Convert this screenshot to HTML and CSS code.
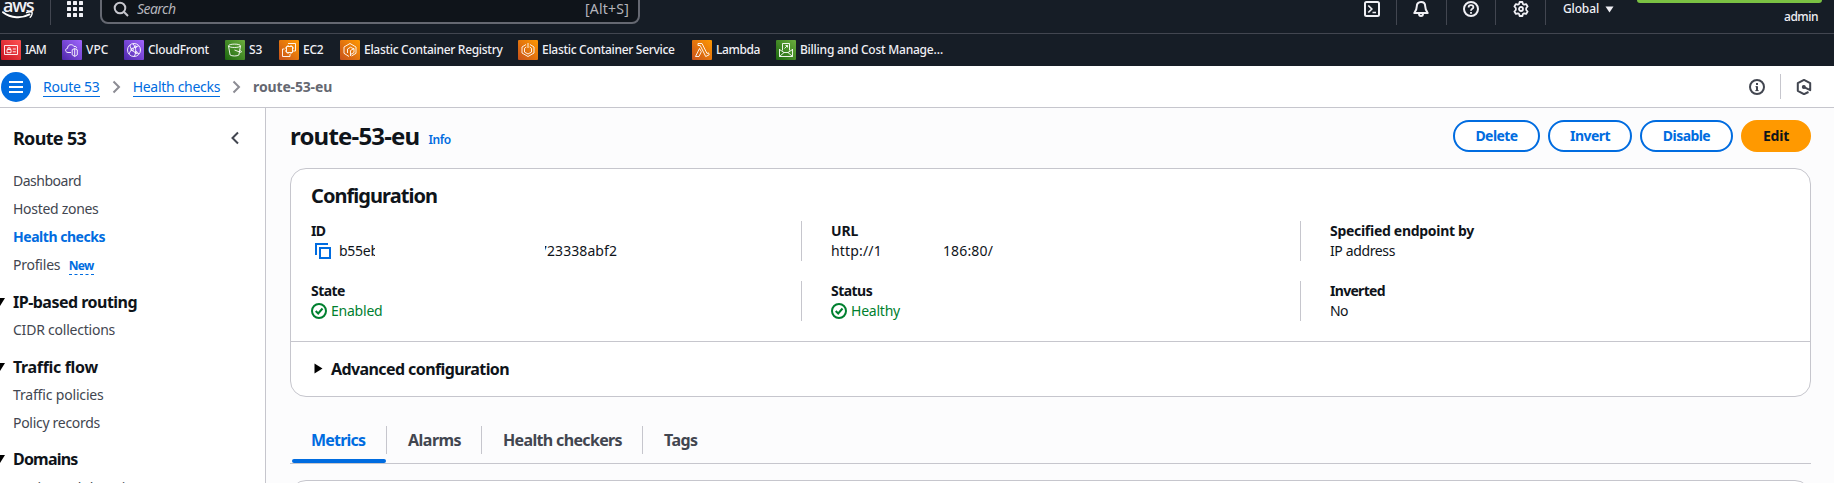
FILE: index.html
```html
<!DOCTYPE html>
<html lang="en">
<head>
<meta charset="utf-8">
<title>route-53-eu</title>
<link rel="stylesheet" href="styles.css">
</head>
<body>
<header class="topbar">
  <div class="logo">
    <span class="logo-word">aws</span>
    <svg class="logo-smile" width="32" height="9" viewBox="0 0 32 9"><path d="M1 1.2C9 7.4 20 7.6 27.5 3.4" fill="none" stroke="#fff" stroke-width="1.9" stroke-linecap="round"/><path d="M24.6 1.6c2-.9 4.6-.9 5.4-.3.5.9-.3 3.600-1.800 5" fill="none" stroke="#fff" stroke-width="1.400" stroke-linecap="round"/></svg>
  </div>
  <i class="sep sep-logo"></i>
  <svg class="grid-icon" width="16" height="16" viewBox="0 0 16 16" fill="#f0f0f5"><rect width="4" height="4" rx=".6"/><rect x="6" width="4" height="4" rx=".6"/><rect x="12" width="4" height="4" rx=".6"/><rect y="6" width="4" height="4" rx=".6"/><rect x="6" y="6" width="4" height="4" rx=".6"/><rect x="12" y="6" width="4" height="4" rx=".6"/><rect y="12" width="4" height="4" rx=".6"/><rect x="6" y="12" width="4" height="4" rx=".6"/><rect x="12" y="12" width="4" height="4" rx=".6"/></svg>
  <div class="search">
    <svg width="16" height="16" viewBox="0 0 16 16" fill="none" stroke="#c6c6cd" stroke-width="2"><circle cx="7" cy="7" r="5.300"/><path d="M10.800 10.800 15 15"/></svg>
    <span class="search-text">Search</span>
    <span class="search-key">[Alt+S]</span>
  </div>
  <div class="tools">
    <span class="tool"><svg width="16" height="16" viewBox="0 0 16 16" fill="none" stroke="#f0f0f5" stroke-width="2"><rect x="1" y="1" width="14" height="14" rx="1.500"/><path d="m4.300 4.500 3.500 3.500-3.500 3.500M8.500 11.500H12" stroke-width="1.700"/></svg></span><i class="sep"></i>
    <span class="tool"><svg width="16" height="16" viewBox="0 0 16 16" fill="none" stroke="#f0f0f5" stroke-width="2" stroke-linejoin="round"><path d="M8 1C5.200 1 3.800 3 3.800 5.200c0 3-.8 4.500-2.500 6.800h13.400c-1.700-2.300-2.500-3.800-2.500-6.800C12.200 3 10.800 1 8 1z"/><path d="M6 12.500c0 1.700.8 2.500 2 2.500s2-.8 2-2.500"/></svg></span><i class="sep"></i>
    <span class="tool"><svg width="16" height="16" viewBox="0 0 16 16" fill="none" stroke="#f0f0f5" stroke-width="2"><circle cx="8" cy="8" r="7"/><path d="M5.600 6.500C5.600 5 6.600 4.200 8 4.200s2.400.8 2.400 2.100C10.400 7.800 8 7.900 8 9.700" stroke-width="1.800"/><path d="M8 10.900v1.800" stroke-width="1.800"/></svg></span><i class="sep"></i>
    <span class="tool"><svg width="16" height="16" viewBox="0 0 16 16" fill="none" stroke="#f0f0f5" stroke-width="1.800" stroke-linejoin="round"><path d="M6.600 1h2.800l.5 2 1.200.7 2-.6 1.500 2.400L13.200 7v2l1.400 1.500-1.500 2.400-2-.6-1.200.7-.5 2H6.600l-.5-2-1.200-.7-2 .6-1.500-2.400L2.800 9V7L1.400 5.500l1.500-2.400 2 .6L6.100 3z"/><circle cx="8" cy="8" r="2"/></svg></span><i class="sep"></i>
    <span class="region">Global <svg width="9" height="7" viewBox="0 0 9 7"><path d="M.5.5h8L4.500 6.500z" fill="#f0f0f5"/></svg></span>
    <span class="account"><i class="account-badge"></i><span>admin</span></span>
  </div>
</header>

<nav class="favorites">
  <a class="fav"><svg class="tile red" viewBox="0 0 20 20"><path d="M3.500 5.500h13v9h-13zM6 9.500h4v3.200H6zM6.900 9.500V7.800h2.200v1.700M11.800 9h3M11.800 11.800h3"/></svg><span class="ls-iam">IAM</span></a>
  <a class="fav"><svg class="tile purple" viewBox="0 0 20 20"><path d="M9 12.500H6c-3 0-3.200-4-.4-4.200C5.300 4.500 10.500 3.300 12 6.500c1.500-.6 2.700.3 2.600 1.700M10.200 9.800l2.500-1.300 2.600 1.300v5l-2.600 1.700-2.500-1.700zM12.700 8.700v7.500"/></svg><span class="ls-0">VPC</span></a>
  <a class="fav"><svg class="tile purple" viewBox="0 0 20 20"><circle cx="10" cy="10" r="6.500"/><path d="M5 14c2-5 5-7 9.500-8M6 5c.5 5 3.500 7.500 9 8.500M9 4c3 3 3.500 8 1.500 12"/><circle cx="8.300" cy="9.500" r="1.300"/><circle cx="11.500" cy="6.800" r="1"/><circle cx="12.300" cy="12.500" r="1"/></svg><span>CloudFront</span></a>
  <a class="fav"><svg class="tile green" viewBox="0 0 20 20"><ellipse cx="9.500" cy="5.800" rx="6" ry="1.700"/><path d="m3.500 6 1.600 9c1.500 1.300 7.300 1.300 8.800 0l1.600-9M9.500 10l6 2.300c1.500 0 1.300-1-.8-2"/></svg><span class="ls-0">S3</span></a>
  <a class="fav"><svg class="tile orange" viewBox="0 0 20 20"><path d="M7.500 6.500h6v6h-6zM9 6.500V5m3 1.500V5m-3 9v-1.500m3 1.500v-1.500M7.500 8H6m1.500 3H6m9-3h-1.500m1.500 3h-1.500M9 3.500h7.500V11H15M5.500 9h-2v7.500H11V14"/></svg><span>EC2</span></a>
  <a class="fav"><svg class="tile orange" viewBox="0 0 20 20"><path d="M9 16.500 4 13.300V7l6-3.500L16 7v6.300L11.500 16M7.500 13V9l3-1.800L14 9M10.500 16V10.500L14 8.500v4l-3.500 2"/></svg><span>Elastic Container Registry</span></a>
  <a class="fav"><svg class="tile orange" viewBox="0 0 20 20"><path d="M8 4.500 4 7v6l6 3.500 6-3.500V7l-4-2.500M8.300 7 6.500 8.300v3.800L10 14l3.500-1.900V8.300L11.700 7M10 3v5"/></svg><span>Elastic Container Service</span></a>
  <a class="fav"><svg class="tile orange" viewBox="0 0 20 20"><path d="M6 3.500h4l5 10 1.500-.7.700 2-3.500 1.700-5.500-11H6zM7.500 8.500 3.500 16.500h3.500l2.300-4.800z"/></svg><span class="ls-2">Lambda</span></a>
  <a class="fav"><svg class="tile green" viewBox="0 0 20 20"><path d="M3.500 9v7.500h13V9M3.500 9.500 8 12.500h4l4.500-3M3.500 16.500l4.500-4M16.500 16.500l-4.500-4M6.500 10.500V3.500h7v7M8.500 8.500l3-3M9.500 5.500h2v2"/></svg><span class="ls-1">Billing and Cost Manage…</span></a>
</nav>

<div class="crumbbar">
  <button class="menu" aria-label="Menu"><i></i><i></i><i></i></button>
  <nav class="crumbs">
    <a>Route 53</a>
    <svg width="9" height="14" viewBox="0 0 9 14"><path d="m1.500 1.500 5.500 5.500-5.500 5.500"/></svg>
    <a class="ls-2">Health checks</a>
    <svg width="9" height="14" viewBox="0 0 9 14"><path d="m1.500 1.500 5.500 5.500-5.500 5.500"/></svg>
    <b>route-53-eu</b>
  </nav>
  <div class="helpers">
    <svg width="16" height="16" viewBox="0 0 16 16" fill="none" stroke="#424650" stroke-width="2"><circle cx="8" cy="8" r="7"/><path d="M8 4v2M8 7.200V12" stroke-width="2"/><path d="M6.500 7.700H8M6.300 11.600h3.400" stroke-width="1"/></svg>
    <i></i>
    <svg width="16" height="16" viewBox="0 0 16 16" fill="none" stroke="#424650" stroke-width="2" stroke-linejoin="round"><path d="M12.500 13 8 15.200 1.800 11.800V4.200L8 .9l6.200 3.300v7L8 8.200"/><circle cx="7.800" cy="8" r="1.400" fill="#424650" stroke-width="1.200"/></svg>
  </div>
</div>

<div class="layout">
  <aside class="sidebar">
    <div class="side-head"><h2>Route 53</h2><svg width="10" height="14" viewBox="0 0 10 14"><path d="M8 1.500 2.500 7 8 12.500" fill="none" stroke="#424650" stroke-width="2"/></svg></div>
    <ul>
      <li class="ls-35">Dashboard</li>
      <li class="ls-2">Hosted zones</li>
      <li class="current">Health checks</li>
      <li>Profiles <span class="new">New</span></li>
    </ul>
    <h3><svg width="5" height="8" viewBox="0 0 5 8"><path d="M-5 0H5L0 8z"/></svg><span>IP-based routing</span></h3>
    <ul><li>CIDR collections</li></ul>
    <h3><svg width="5" height="8" viewBox="0 0 5 8"><path d="M-5 0H5L0 8z"/></svg><span class="ls-2">Traffic flow</span></h3>
    <ul><li class="ls-1">Traffic policies</li><li class="ls-2">Policy records</li></ul>
    <h3 class="last"><svg width="5" height="8" viewBox="0 0 5 8"><path d="M-5 0H5L0 8z"/></svg><span class="ls-5">Domains</span></h3>
    <ul class="domains"><li>Registered domains</li></ul>
  </aside>

  <main class="main">
    <div class="title-row">
      <h1>route-53-eu</h1><a class="info">Info</a>
      <div class="actions">
        <button class="btn w87">Delete</button>
        <button class="btn w84">Invert</button>
        <button class="btn w93">Disable</button>
        <button class="btn primary">Edit</button>
      </div>
    </div>

    <section class="card">
      <h2 class="card-title">Configuration</h2>
      <div class="fields">
        <div class="field">
          <b class="ls-5">ID</b>
          <div class="id-value"><svg width="16" height="16" viewBox="0 0 16 16" fill="none" stroke="#006ce0" stroke-width="2"><path d="M5 5h10v10H5z"/><path d="M1 12V1h12"/></svg><span class="id-start">b55eb</span><span class="id-end">723338abf2</span></div>
        </div>
        <div class="field ruled"><b class="ls-1">URL</b><div class="url-value"><span>http://1</span><span>186:80/</span></div></div>
        <div class="field ruled"><b class="ls-2">Specified endpoint by</b><div class="ls-25">IP address</div></div>
        <div class="field"><b>State</b><div class="ok"><svg width="16" height="16" viewBox="0 0 16 16"><circle cx="8" cy="8" r="7"/><path d="m4.700 8 2.500 2.500 4.300-5"/></svg><span>Enabled</span></div></div>
        <div class="field ruled"><b>Status</b><div class="ok"><svg width="16" height="16" viewBox="0 0 16 16"><circle cx="8" cy="8" r="7"/><path d="m4.700 8 2.500 2.500 4.300-5"/></svg><span>Healthy</span></div></div>
        <div class="field ruled"><b class="ls-5">Inverted</b><div class="ls-5">No</div></div>
      </div>
      <div class="advanced"><svg width="9" height="11" viewBox="0 0 9 11"><path d="M.5.5v10l8-5z"/></svg><span>Advanced configuration</span></div>
    </section>

    <div class="tabs">
      <span class="tab active">Metrics</span>
      <span class="tab alarms">Alarms</span>
      <span class="tab checkers">Health checkers</span>
      <span class="tab">Tags</span>
    </div>
    <section class="card next"></section>
  </main>
</div>
</body>
</html>
```
FILE: styles.css
```css
* { box-sizing: border-box; }
body {
  margin: 0; height: 483px; overflow: hidden;
  display: flex; flex-direction: column;
  background: #fff; color: #0f141a;
  font: 14px/20px "Noto Sans", "Open Sans", sans-serif;
  letter-spacing: -.016em;
}
h1, h2, h3, ul { margin: 0; padding: 0; list-style: none; }
b, h1, h2, h3 { font-weight: 700; letter-spacing: -.038em; }
svg { display: block; flex: none; }
button { font: inherit; padding: 0; }

.ls-0 { letter-spacing: 0; }
.ls-1, b.ls-1 { letter-spacing: -.012em; }
.ls-2, b.ls-2 { letter-spacing: -.021em; }
.ls-25 { letter-spacing: -.027em; }
.ls-35 { letter-spacing: -.035em; }
.ls-5, b.ls-5 { letter-spacing: -.050em; }
.ls-iam { letter-spacing: -.059em; }

/* Top bar */
.topbar {
  flex: none; height: 34px; overflow: hidden;
  display: flex; align-items: flex-end;
  background: #161d26; color: #f0f0f5;
  border-bottom: 1px solid #424650;
}
.logo { flex: none; width: 50px; height: 40px; padding: 0 0 13px 2px; display: flex; flex-direction: column; justify-content: flex-end; }
.logo-word { font: 600 18px/22px "Open Sans", sans-serif; letter-spacing: -1.2px; padding-left: 1px; margin-bottom: -5px; }
.sep { flex: none; width: 1px; height: 40px; margin-bottom: 8px; background: #424650; }
.grid-icon { margin: 0 17px 16px 16px; }
.search {
  flex: none; width: 540px; height: 36px; margin-bottom: 9px; padding: 6px 9px 0 11px;
  display: flex; align-items: center; gap: 8px;
  background: #0f141a; border: 2px solid #656871; border-radius: 8px;
  color: #b4b4bb;
}
.search-text { font-style: italic; letter-spacing: -.039em; }
.search-key { margin-left: auto; letter-spacing: .015em; }
.tools { margin-left: auto; display: flex; align-items: flex-end; }
.tool { width: 49px; padding: 0 16px 16px; }
.tool:first-child { width: 32px; padding: 0 16px 16px 0; }
.tool:nth-of-type(3) { width: 48px; }
.tool:nth-of-type(4) { padding-left: 17px; }
.tool + .sep { height: 41px; }
.region { width: 92px; display: flex; align-items: center; gap: 6px; padding: 0 0 15px 17px; font-size: 12px; font-weight: 500; line-height: 18px; letter-spacing: -.012em; }
.account { width: 196px; height: 33px; display: flex; flex-direction: column; align-items: flex-end; padding-right: 16px; font-size: 12px; font-weight: 500; letter-spacing: -.041em; }
.account-badge { width: 185px; height: 3px; margin: 0 -4px 4px 0; background: #7ac143; border-radius: 0 0 4px 4px; }

/* Favorites */
.favorites {
  flex: none; height: 32px; padding-left: 1px;
  display: grid; grid-template-columns: 61px 62px 101px 54px 61px 178px 174px 84px auto; justify-content: start; align-items: center;
  background: #161d26; color: #f0f0f5; font-size: 12px; font-weight: 500; letter-spacing: -.025em;
}
.fav { display: flex; align-items: center; gap: 4px; white-space: nowrap; }
.favorites .ls-1 { letter-spacing: -.020em; }
.favorites .ls-2 { letter-spacing: -.033em; }
.tile { width: 20px; height: 20px; border-radius: 1px; fill: none; stroke: #fff; stroke-width: .9; stroke-linejoin: round; }
.red { background: linear-gradient(45deg, #c7131f, #ff5252); }
.purple { background: linear-gradient(45deg, #4d27aa, #a166ff); }
.green { background: linear-gradient(45deg, #1b660f, #6cae3e); }
.orange { background: linear-gradient(45deg, #c8511b, #f90); }

/* Breadcrumb bar */
.crumbbar { flex: none; height: 42px; padding: 0 22px 0 1px; display: flex; align-items: center; border-bottom: 1px solid #c6c6cd; }
.menu { width: 30px; height: 30px; border: 0; border-radius: 50%; background: #006ce0; display: flex; flex-direction: column; align-items: center; justify-content: center; gap: 3px; }
.menu i { width: 14px; height: 2px; background: #fff; }
.crumbs { display: flex; align-items: center; gap: 12px; padding-left: 12px; }
.crumbs a { color: #006ce0; border-bottom: 1px solid #006ce0; line-height: 18px; margin-top: 1px; }
.crumbs b { color: #656871; letter-spacing: -.011em; }
.crumbs svg { fill: none; stroke: #8c8c94; stroke-width: 2; }
.helpers { margin-left: auto; display: flex; align-items: center; gap: 15px; }
.helpers i { width: 1px; height: 25px; background: #c6c6cd; }

/* Sidebar */
.layout { flex: 1; min-height: 0; display: flex; }
.sidebar { flex: none; width: 266px; overflow: hidden; border-right: 1px solid #c6c6cd; color: #424650; }
.side-head { height: 59px; padding: 19px 25px 0 13px; display: flex; justify-content: space-between; align-items: flex-start; color: #0f141a; }
.side-head h2 { font-size: 18px; line-height: 22px; }
.side-head svg { margin-top: 4px; }
.sidebar li { height: 28px; padding-left: 13px; line-height: 28px; white-space: nowrap; }
.sidebar .current { color: #006ce0; font-weight: 700; letter-spacing: -.033em; }
.new { display: inline-block; margin-left: 5px; color: #006ce0; font-size: 12px; font-weight: 700; line-height: 17px; border-bottom: 1px dashed #006ce0; letter-spacing: -.054em; }
.sidebar h3 { display: flex; align-items: center; gap: 8px; height: 28px; margin-top: 9px; color: #0f141a; font-size: 16px; letter-spacing: -.032em; }
.sidebar h3.last { margin-top: 8px; }
.domains { padding-top: 1px; }

/* Main */
.main { flex: 1; padding: 12px 23px 0 24px; background: #fcfcfd; overflow: hidden; }
.title-row { display: flex; align-items: center; height: 32px; margin-bottom: 16px; }
h1 { font-size: 24px; line-height: 30px; letter-spacing: -.034em; margin-top: -1px; }
.info { color: #006ce0; font-size: 12px; font-weight: 600; margin: 7px 0 0 9px; letter-spacing: -.033em; }
.actions { margin-left: auto; display: flex; gap: 8px; }
.btn { height: 32px; border: 2px solid #006ce0; border-radius: 16px; background: #fff; color: #006ce0; font-weight: 700; letter-spacing: -.040em; }
.w87 { width: 87px; }
.w84 { width: 84px; }
.w93 { width: 93px; }
.primary { width: 70px; border-color: #f90; background: #f90; color: #0f141a; letter-spacing: -.017em; }

.card { height: 229px; background: #fff; border: 1px solid #c6c6cd; border-radius: 16px; }
.card-title { padding: 14px 0 0 20px; font-size: 20px; line-height: 26px; letter-spacing: -.047em; }
.fields { display: grid; grid-template-columns: 490px 499px 1fr; row-gap: 20px; margin: 12px 0 20px 20px; }
.field { height: 40px; }
.ruled { border-left: 1px solid #c6c6cd; padding-left: 29px; }
.field b { display: block; }
.id-value, .url-value, .ok { display: flex; align-items: center; }
.id-value { padding-left: 4px; }
.id-start { width: 36px; margin-left: 8px; overflow: hidden; letter-spacing: -.02em; }
.id-end { width: 72px; margin-left: 170px; overflow: hidden; display: flex; justify-content: flex-end; letter-spacing: .005em; }
.url-value { gap: 61px; letter-spacing: .012em; }
.ok { gap: 4px; color: #00802f; }
.ok svg { fill: none; stroke: #00802f; stroke-width: 2; }
.advanced { height: 54px; padding-left: 23px; display: flex; align-items: center; gap: 8px; border-top: 1px solid #c6c6cd; font-size: 16px; font-weight: 700; letter-spacing: -.037em; }

.tabs { height: 67px; padding-top: 29px; display: flex; border-bottom: 1px solid #c6c6cd; color: #424650; font-size: 16px; font-weight: 700; letter-spacing: -.032em; }
.tab { height: 28px; line-height: 28px; padding: 0 20px 0 21px; border-right: 1px solid #c6c6cd; white-space: nowrap; }
.tab:last-child { border: 0; }
.active { position: relative; width: 97px; color: #006ce0; letter-spacing: -.05em; }
.active::after { content: ""; position: absolute; left: 2px; right: 0; bottom: -9px; height: 4px; border-radius: 2px; background: #006ce0; }
.alarms { width: 95px; }
.checkers { width: 161px; letter-spacing: -.041em; }
.next { margin-top: 16px; }
```
